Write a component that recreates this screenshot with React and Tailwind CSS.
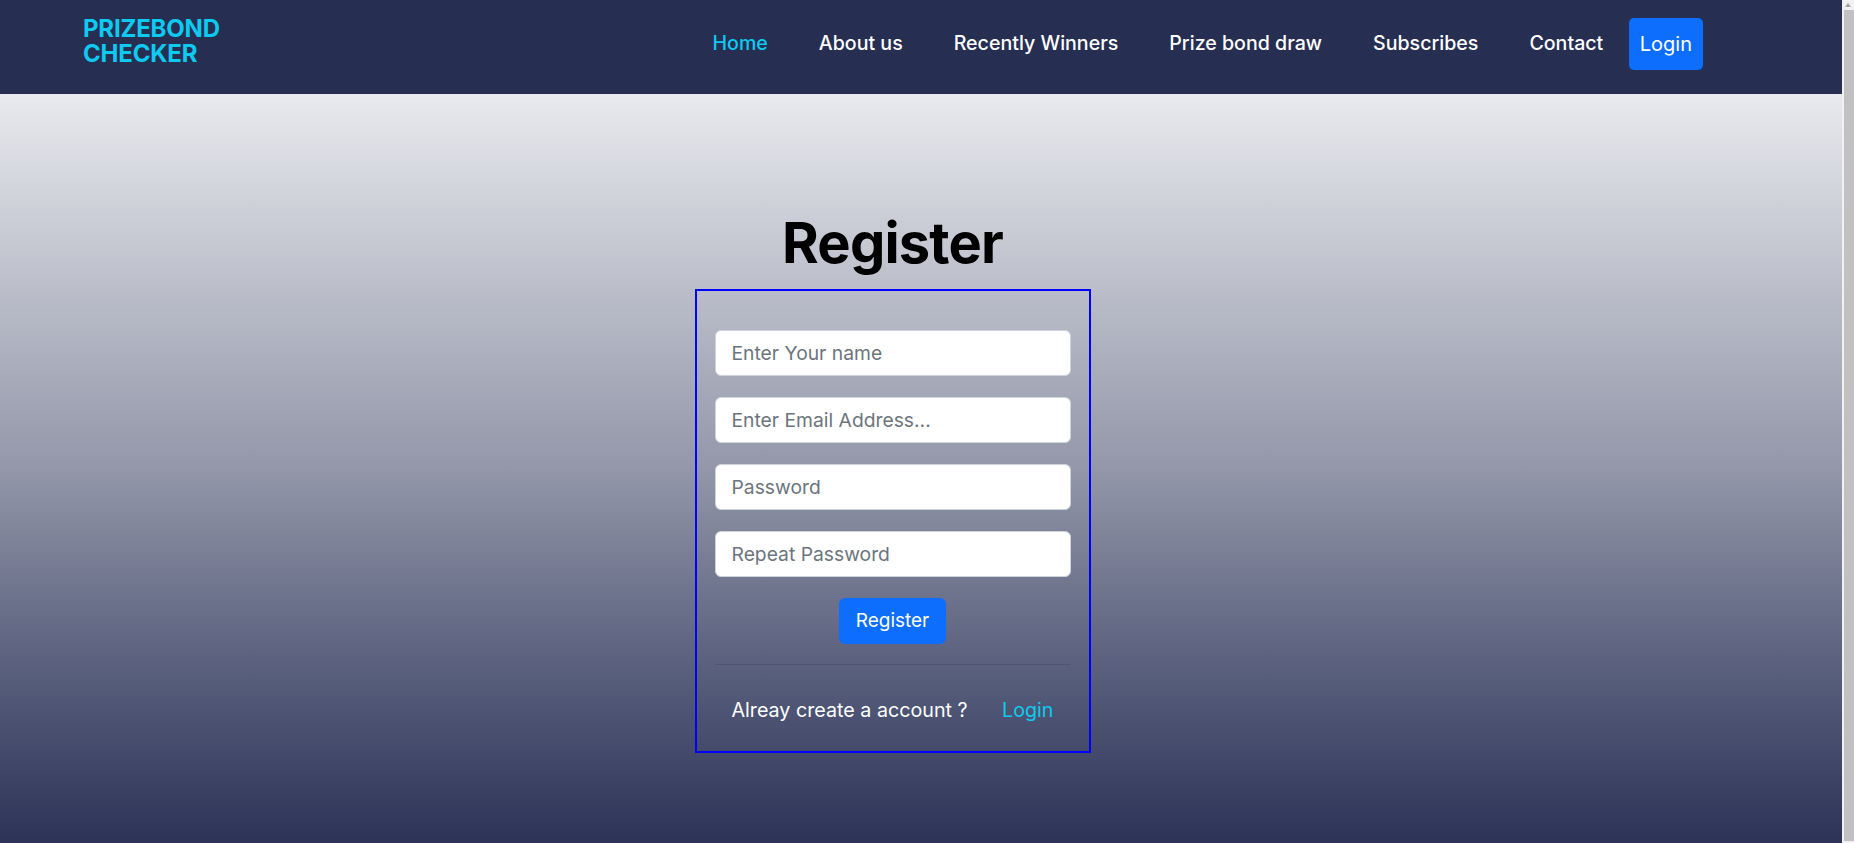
import React from "react";

function Header() {
  const links = ["About us", "Recently Winners", "Prize bond draw", "Subscribes", "Contact"];
  return (
    <header className="h-[94px] bg-[#262e52] flex items-start pl-[83px] pr-[139px]">
      <div className="mt-[16px] text-[24px] leading-[25px] font-bold text-[#0dcaf0] tracking-[-0.2px]">
        <div>PRIZEBOND</div>
        <div>CHECKER</div>
      </div>
      <nav className="ml-auto flex items-center mt-[18px] h-[52px]">
        <a className="px-[25.5px] mb-[2px] text-[19.6px] font-medium text-[#0dcaf0] leading-[24px]">Home</a>
        {links.map((l) => (
          <a key={l} className="px-[25.5px] mb-[2px] text-[19.6px] font-medium text-white leading-[24px] whitespace-nowrap">
            {l}
          </a>
        ))}
        <button className="h-[52px] px-[11px] rounded-[5px] bg-[#0d6efd] text-white text-[20px] leading-[24px]">
          Login
        </button>
      </nav>
    </header>
  );
}

function Field({ placeholder, type = "text" }) {
  return (
    <input
      type={type}
      placeholder={placeholder}
      className="block w-full h-[46px] rounded-[6px] border border-[#ced4da] bg-white px-[16px] text-[19.3px] text-[#212529] placeholder:text-[#6c757d] outline-none"
    />
  );
}

export default function App() {
  return (
    <div className="flex h-[843px] w-full overflow-hidden font-[Inter,sans-serif]">
      <div className="flex-1 flex flex-col min-w-0">
        <Header />
        <main className="flex-1 bg-linear-to-b from-[#e9eaee] via-[#9397a9] to-[#2c3357] flex flex-col items-center pr-[57px] pt-[116px]">
          <h1 className="text-[56px] leading-[67px] font-bold text-black tracking-[-0.015em]">Register</h1>
          <div className="mt-[12px] w-[396px] border-2 border-[#0000ff] px-[18px] pt-[39px] pb-[27px]">
            <div className="flex flex-col gap-[21px]">
              <Field placeholder="Enter Your name" />
              <Field placeholder="Enter Email Address..." type="email" />
              <Field placeholder="Password" type="password" />
              <Field placeholder="Repeat Password" type="password" />
            </div>
            <div className="flex justify-center mt-[21px]">
              <button className="h-[46px] px-[17px] rounded-[6px] bg-[#0d6efd] text-white text-[19px]">Register</button>
            </div>
            <div className="mt-[20px] border-t border-[#50556f]" />
            <div className="mt-[31px] h-[28px] flex items-center justify-between px-[17px] text-[19.7px] leading-[28px]">
              <span className="text-white">Alreay create a account ?</span>
              <a className="text-[#0dcaf0]">Login</a>
            </div>
          </div>
        </main>
      </div>
      <div className="w-[12px] bg-[#f1f1f1] flex flex-col">
        <div className="h-[10px] flex items-center justify-center">
          <div className="w-0 h-0 border-l-[3px] border-r-[3px] border-b-[4px] border-l-transparent border-r-transparent border-b-[#a3a3a3]" />
        </div>
        <div className="flex-1 ml-[2px] mb-[2px] bg-[#c1c1c1]" />
      </div>
    </div>
  );
}
